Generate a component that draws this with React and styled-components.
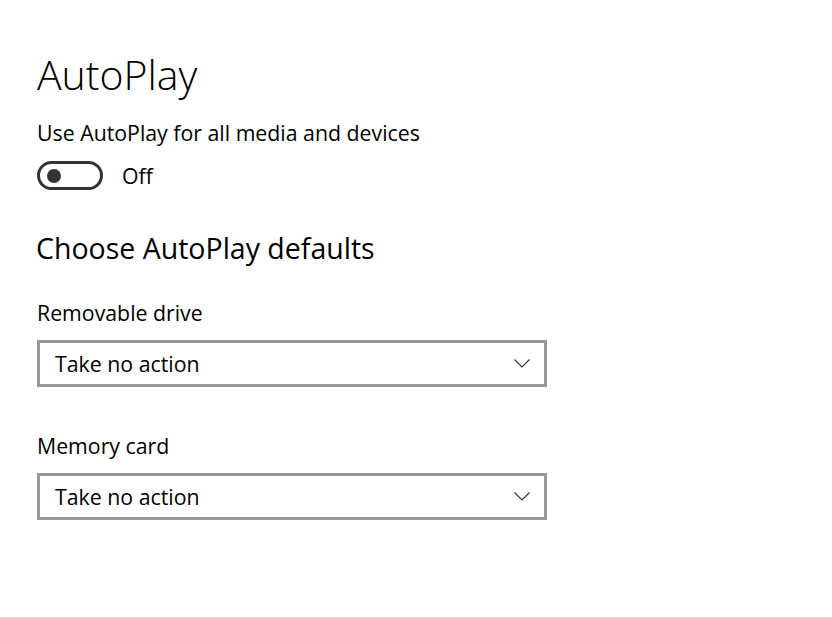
import React from "react";
import styled, { createGlobalStyle } from "styled-components";

const GlobalStyle = createGlobalStyle`
  html, body {
    margin: 0;
    padding: 0;
    background: #ffffff;
  }
  body {
    font-family: "Open Sans", "Noto Sans", sans-serif;
    color: #000000;
  }
`;

const Page = styled.div`
  display: flex;
  flex-direction: column;
  align-items: flex-start;
  width: 832px;
  height: 617px;
  box-sizing: border-box;
  padding: 48px 0 0 37px;
`;

const Title = styled.h1`
  margin: 0;
  font-size: 41px;
  font-weight: 300;
  line-height: 52px;
`;

const Label = styled.div`
  font-size: 21.3px;
  line-height: 28px;
  margin-top: ${({ $top }) => $top || 0}px;
`;

const ToggleRow = styled.div`
  display: flex;
  align-items: center;
  gap: 19px;
  margin-top: 14px;
`;

const Track = styled.div`
  width: 66px;
  height: 29px;
  box-sizing: border-box;
  border: 3px solid #333333;
  border-radius: 15px;
  display: flex;
  align-items: center;
  padding-left: 7px;
`;

const Knob = styled.span`
  width: 14px;
  height: 14px;
  border-radius: 50%;
  background: #333333;
`;

const ToggleText = styled.span`
  font-size: 21.3px;
  line-height: 28px;
`;

const Heading = styled.h2`
  margin: 40px 0 0 -1px;
  font-size: 28.5px;
  font-weight: 400;
  line-height: 36px;
`;

const Select = styled.div`
  width: 510px;
  height: 47px;
  box-sizing: border-box;
  border: 3px solid #999999;
  display: flex;
  align-items: center;
  justify-content: space-between;
  padding: 0 14px 0 15px;
  margin-top: 13px;
  font-size: 21.3px;
`;

const Chevron = () => (
  <svg width="16" height="9" viewBox="0 0 16 9">
    <path d="M0.5 0.5 L8 8 L15.5 0.5" fill="none" stroke="#333" strokeWidth="1.1" />
  </svg>
);

const Dropdown = ({ value }) => (
  <Select>
    <span>{value}</span>
    <Chevron />
  </Select>
);

export default function App() {
  return (
    <>
      <GlobalStyle />
      <Page>
        <Title>AutoPlay</Title>
        <Label $top={19}>Use AutoPlay for all media and devices</Label>
        <ToggleRow>
          <Track>
            <Knob />
          </Track>
          <ToggleText>Off</ToggleText>
        </ToggleRow>
        <Heading>Choose AutoPlay defaults</Heading>
        <Label $top={33}>Removable drive</Label>
        <Dropdown value="Take no action" />
        <Label $top={45}>Memory card</Label>
        <Dropdown value="Take no action" />
      </Page>
    </>
  );
}
